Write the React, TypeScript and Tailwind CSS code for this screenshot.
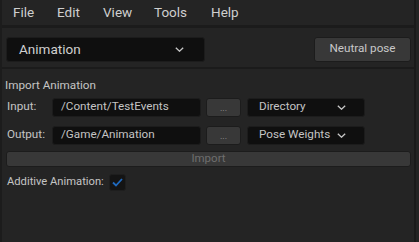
import { FC } from 'react'

const Chevron: FC = () => (
  <svg width="9" height="5" viewBox="0 0 9 5" className="shrink-0 text-[#c8c8c8]">
    <path d="M0.8 0.8l3.7 3.4 3.7-3.4" fill="none" stroke="currentColor" strokeWidth="1.3" />
  </svg>
)

const PathRow: FC<{ label: string; value: string; mode: string }> = ({ label, value, mode }) => (
  <div className="flex items-center h-[18px]">
    <span className="shrink-0 w-[50px] pl-[5px] text-[11.7px] text-[#c4c4c4]">{label}</span>
    <div className="shrink-0 w-[149px] h-[19px] rounded-[3px] bg-[#0f0f0f] border border-[#1c1c1c] pl-[8px] flex items-center text-[11.7px] text-[#c4c4c4]">
      {value}
    </div>
    <div className="shrink-0 ml-[5px] w-[35px] h-[19px] rounded-[3px] bg-[#383838] border border-[#1c1c1c] flex items-center justify-center text-[9px] text-[#9a9a9a] leading-none pt-[3px]">
      ...
    </div>
    <div className="shrink-0 ml-[6px] w-[118px] h-[19px] rounded-[3px] bg-[#0f0f0f] border border-[#1c1c1c] pl-[11px] pr-[18px] flex items-center justify-between text-[11.7px] text-[#c4c4c4]">
      <span>{mode}</span>
      <Chevron />
    </div>
  </div>
)

export default function App() {
  return (
    <div
      className="w-[419px] h-[242px] bg-[#242424] flex overflow-hidden"
      style={{ fontFamily: 'Roboto, "Liberation Sans", sans-serif' }}
    >
      <div className="shrink-0 w-[2px] bg-[#1c1c1c]" />
      <div className="shrink-0 w-[412px] flex flex-col">
        <div className="h-[25px] flex items-center text-[13.5px] text-[#cfcfcf]">
          <span className="ml-[11px] w-[44px]">File</span>
          <span className="w-[46px]">Edit</span>
          <span className="w-[51px]">View</span>
          <span className="w-[57px]">Tools</span>
          <span>Help</span>
        </div>
        <div className="h-[3px] bg-[#1b1b1b]" />
        <div className="h-[39px] flex items-center justify-between pl-[4px] pr-[3px] pt-[3px]">
          <div className="w-[199px] h-[25px] rounded-[3px] bg-[#0f0f0f] border border-[#1c1c1c] flex items-center justify-between pl-[12px] pr-[20px] text-[13.5px] text-[#d0d0d0]">
            <span>Animation</span>
            <Chevron />
          </div>
          <div className="w-[97px] h-[25px] rounded-[3px] bg-[#383838] border border-[#1c1c1c] flex items-center justify-center text-[11.7px] text-[#c8c8c8]">
            Neutral pose
          </div>
        </div>
        <div className="h-[2px] bg-[#1b1b1b]" />
        <div className="pt-[8px] pl-[3px] text-[11.7px] text-[#c4c4c4] h-[29px]">Import Animation</div>
        <div className="flex flex-col gap-[10px]">
          <PathRow label="Input:" value="/Content/TestEvents" mode="Directory" />
          <PathRow label="Output:" value="/Game/Animation" mode="Pose Weights" />
        </div>
        <div className="mt-[7px] ml-[4px] mr-[3px] h-[16px] rounded-[3px] bg-[#383838] border border-[#1c1c1c] flex items-center justify-center text-[11.5px] text-[#6e6e6e]">
          Import
        </div>
        <div className="mt-[7px] flex items-center h-[17px]">
          <span className="pl-[5px] text-[11.2px] text-[#c4c4c4]">Additive Animation:</span>
          <div className="ml-[5px] w-[17px] h-[17px] rounded-[3px] bg-[#141414] border border-[#1e1e1e] flex items-center justify-center">
            <svg width="11" height="9" viewBox="0 0 11 9">
              <path d="M1 4.5l3 3 6-6.5" fill="none" stroke="#1f6ac0" strokeWidth="1.8" />
            </svg>
          </div>
        </div>
      </div>
      <div className="shrink-0 w-[2px] bg-[#1a1a1a]" />
      <div className="flex-1 bg-[#232323]" />
    </div>
  )
}
